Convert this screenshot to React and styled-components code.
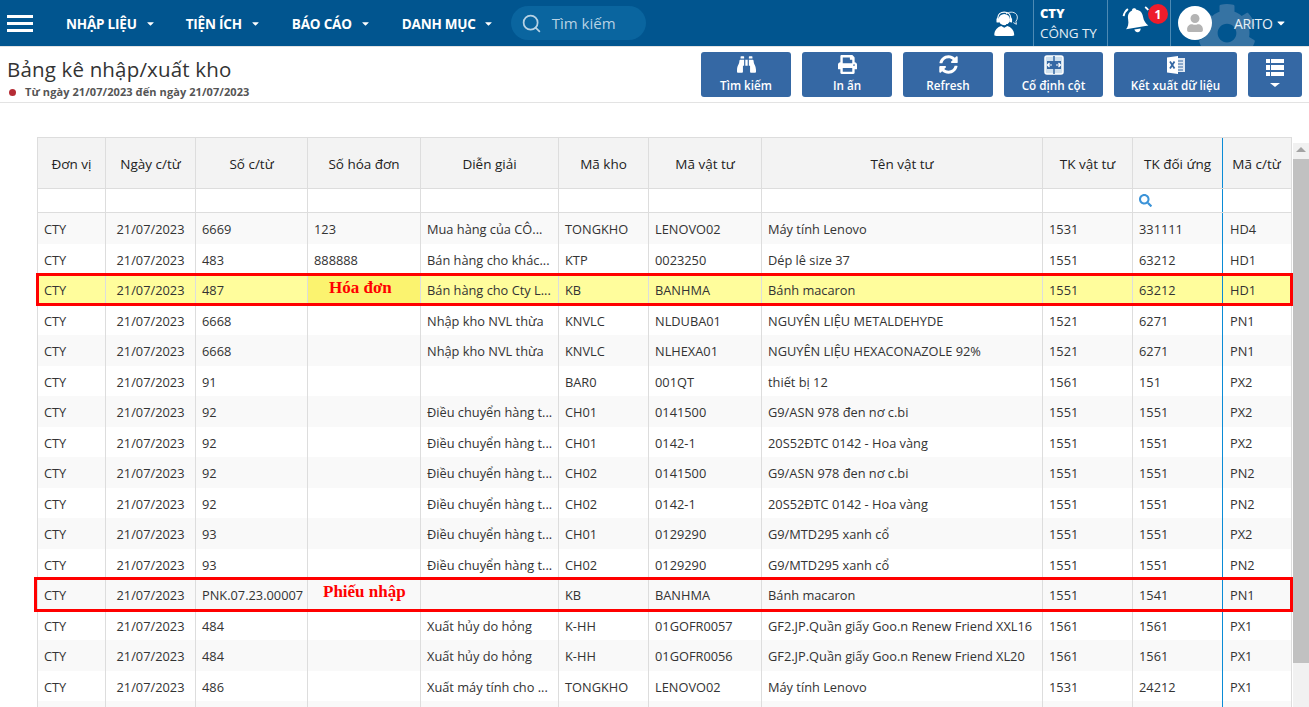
import React from "react";
import styled, { createGlobalStyle } from "styled-components";
import { FaBinoculars, FaPrint, FaSyncAlt, FaCog, FaUser, FaCaretDown, FaSearch } from "react-icons/fa";
import { FiSearch } from "react-icons/fi";

const columns = "68px 90px 112px 113px 138px 90px 113px 281px 90px 90px 68px";

const headers = ["Đơn vị", "Ngày c/từ", "Số c/từ", "Số hóa đơn", "Diễn giải", "Mã kho", "Mã vật tư", "Tên vật tư", "TK vật tư", "TK đối ứng", "Mã c/từ"];

const rows = [
  ["6669", "123", "Mua hàng của CÔ...", "TONGKHO", "LENOVO02", "Máy tính Lenovo", "1531", "331111", "HD4"],
  ["483", "888888", "Bán hàng cho khác...", "KTP", "0023250", "Dép lê size 37", "1551", "63212", "HD1"],
  ["487", "", "Bán hàng cho Cty L...", "KB", "BANHMA", "Bánh macaron", "1551", "63212", "HD1"],
  ["6668", "", "Nhập kho NVL thừa", "KNVLC", "NLDUBA01", "NGUYÊN LIỆU METALDEHYDE", "1521", "6271", "PN1"],
  ["6668", "", "Nhập kho NVL thừa", "KNVLC", "NLHEXA01", "NGUYÊN LIỆU HEXACONAZOLE 92%", "1521", "6271", "PN1"],
  ["91", "", "", "BAR0", "001QT", "thiết bị 12", "1561", "151", "PX2"],
  ["92", "", "Điều chuyển hàng t...", "CH01", "0141500", "G9/ASN 978 đen nơ c.bi", "1551", "1551", "PX2"],
  ["92", "", "Điều chuyển hàng t...", "CH01", "0142-1", "20S52ĐTC 0142 - Hoa vàng", "1551", "1551", "PX2"],
  ["92", "", "Điều chuyển hàng t...", "CH02", "0141500", "G9/ASN 978 đen nơ c.bi", "1551", "1551", "PN2"],
  ["92", "", "Điều chuyển hàng t...", "CH02", "0142-1", "20S52ĐTC 0142 - Hoa vàng", "1551", "1551", "PN2"],
  ["93", "", "Điều chuyển hàng t...", "CH01", "0129290", "G9/MTD295 xanh cổ", "1551", "1551", "PX2"],
  ["93", "", "Điều chuyển hàng t...", "CH02", "0129290", "G9/MTD295 xanh cổ", "1551", "1551", "PN2"],
  ["PNK.07.23.00007", "", "", "KB", "BANHMA", "Bánh macaron", "1551", "1541", "PN1"],
  ["484", "", "Xuất hủy do hỏng", "K-HH", "01GOFR0057", "GF2.JP.Quần giấy Goo.n Renew Friend XXL16", "1561", "1561", "PX1"],
  ["484", "", "Xuất hủy do hỏng", "K-HH", "01GOFR0056", "GF2.JP.Quần giấy Goo.n Renew Friend XL20", "1561", "1561", "PX1"],
  ["486", "", "Xuất máy tính cho ...", "TONGKHO", "LENOVO02", "Máy tính Lenovo", "1531", "24212", "PX1"],
];

const GlobalStyle = createGlobalStyle`
  html, body {
    margin: 0;
    padding: 0;
    background: #fff;
    font-family: "Open Sans", "Noto Sans", sans-serif;
    overflow: hidden;
  }
`;

const Page = styled.div`
  width: 1309px;
  height: 707px;
  display: flex;
  flex-direction: column;
  overflow: hidden;
  position: relative;
`;

const Topbar = styled.header`
  height: 46px;
  flex: none;
  background: #01558f;
  display: flex;
  align-items: center;
  color: #fff;
  position: relative;
  overflow: hidden;
`;

const Burger = styled.div`
  width: 26px;
  margin: 0 33px 0 7px;
  display: flex;
  flex-direction: column;
  gap: 4px;
  span {
    display: block;
    height: 3px;
    background: #fff;
  }
`;

const NavItem = styled.div`
  display: flex;
  align-items: center;
  padding-top: 1px;
  font-size: 13.5px;
  font-weight: 700;
  letter-spacing: -0.2px;
  white-space: nowrap;
  margin-left: ${(p) => p.$gap}px;
  svg {
    margin-left: ${(p) => p.$caret}px;
    font-size: 11px;
  }
`;

const SearchPill = styled.div`
  width: 135px;
  height: 34px;
  margin-left: 17px;
  border-radius: 17px;
  background: #0a659f;
  display: flex;
  align-items: center;
  padding-left: 10px;
  box-sizing: border-box;
  color: #b7d2e4;
  font-size: 15px;
  svg {
    font-size: 21px;
    margin-right: 10px;
  }
`;

const TopRight = styled.div`
  margin-left: auto;
  display: flex;
  align-items: stretch;
  height: 46px;
  position: relative;
`;

const Support = styled.div`
  width: 62px;
  display: flex;
  align-items: center;
  padding-left: 21px;
  box-sizing: border-box;
`;

const Company = styled.div`
  width: 74px;
  border-left: 1px solid #4d8ab4;
  padding-left: 6px;
  box-sizing: border-box;
  display: flex;
  flex-direction: column;
  justify-content: center;
  line-height: 20px;
  font-size: 13.5px;
  letter-spacing: -0.1px;
  white-space: nowrap;
  color: #e4eef5;
  strong {
    font-size: 13px;
    font-weight: 800;
    color: #fff;
  }
`;

const Notify = styled.div`
  width: 64px;
  border-left: 1px solid #4d8ab4;
  border-right: 1px solid #4d8ab4;
  box-sizing: border-box;
  position: relative;
`;

const BellWrap = styled.div`
  position: absolute;
  left: 14px;
  top: 4px;
`;

const Badge = styled.span`
  position: absolute;
  left: 40px;
  top: 4px;
  width: 20px;
  height: 20px;
  border-radius: 50%;
  background: #ee1c2b;
  color: #fff;
  font-size: 12px;
  font-weight: 700;
  display: flex;
  align-items: center;
  justify-content: center;
`;

const UserBox = styled.div`
  width: 138px;
  display: flex;
  align-items: center;
  padding-left: 7px;
  box-sizing: border-box;
  font-size: 14px;
  letter-spacing: -0.3px;
  color: #e8f0f6;
  position: relative;
  svg.caret {
    margin-left: 2px;
    font-size: 12px;
    color: #fff;
    position: relative;
  }
`;

const Avatar = styled.div`
  width: 34px;
  height: 34px;
  border-radius: 50%;
  background: #fff;
  color: #b4b4b4;
  display: flex;
  align-items: center;
  justify-content: center;
  font-size: 18px;
  margin-right: 22px;
  flex: none;
  position: relative;
`;

const GearMark = styled(FaCog)`
  position: absolute;
  left: 26px;
  top: 3px;
  font-size: 60px;
  color: #3673a3;
`;

const UserName = styled.span`
  position: relative;
`;

const SubHeader = styled.div`
  height: 55px;
  flex: none;
  border-top: 1px solid #e3e3e3;
  border-bottom: 1px solid #e3e3e3;
  display: flex;
  justify-content: space-between;
  align-items: flex-start;
`;

const TitleBlock = styled.div`
  padding: 9px 0 0 7px;
`;

const Title = styled.h1`
  margin: 0;
  font-size: 20.5px;
  font-weight: 400;
  line-height: 27px;
  color: #333;
  letter-spacing: 0.17px;
`;

const DateLine = styled.div`
  display: flex;
  align-items: center;
  margin-top: 1px;
  font-size: 11px;
  font-weight: 700;
  letter-spacing: 0.08px;
  color: #555;
  line-height: 16px;
  &::before {
    content: "";
    width: 7px;
    height: 7px;
    border-radius: 50%;
    background: #b52c35;
    margin: 0 9px 0 2px;
  }
`;

const Toolbar = styled.div`
  display: flex;
  gap: 11px;
  padding: 5px 7px 0 0;
`;

const ToolButton = styled.button`
  width: ${(p) => p.$w}px;
  height: 45px;
  padding: 0;
  border: 0;
  border-radius: 3px;
  background: #3568a4;
  color: #fff;
  font-family: inherit;
  font-size: 11.7px;
  font-weight: 600;
  display: flex;
  flex-direction: column;
  align-items: center;
  justify-content: flex-start;
  span {
    margin-top: 1px;
    line-height: 15px;
  }
`;

const IconSlot = styled.div`
  height: ${(p) => p.$h || 25}px;
  display: flex;
  align-items: center;
  justify-content: center;
  font-size: 19px;
`;

const Content = styled.div`
  margin-top: 34px;
  flex: 1;
  display: flex;
  min-height: 0;
  padding-left: 37px;
  position: relative;
`;

const Grid = styled.div`
  width: 1254px;
  flex: none;
  border-top: 1px solid #ddd;
  border-right: 1px solid #ddd;
  overflow: hidden;
`;

const Row = styled.div`
  display: grid;
  grid-template-columns: ${columns};
  box-sizing: border-box;
  height: ${(p) => p.$h}px;
  background: ${(p) => p.$bg || "#fff"};
  font-size: 12.8px;
  color: #333;
`;

const HeadRow = styled(Row)`
  border-bottom: 1px solid #ddd;
  color: #222;
  font-size: 13.5px;
  font-weight: 500;
`;

const FilterRow = styled(Row)`
  border-bottom: 1px solid #ddd;
`;

const Cell = styled.div`
  border-left: 1px solid ${(p) => (p.$pinned ? "#0a8bd6" : "#ddd")};
  padding-top: ${(p) => p.$top || 0}px;
  padding-left: ${(p) => (p.$center ? 0 : p.$pinned ? 7 : 6)}px;
  display: flex;
  align-items: center;
  justify-content: ${(p) => (p.$center ? "center" : "flex-start")};
  white-space: nowrap;
  overflow: hidden;
  background: ${(p) => (p.$marked ? "#fbf36f" : "transparent")};
  svg {
    color: #3b93d8;
    font-size: 13px;
  }
`;

const Track = styled.div`
  width: 17px;
  margin: 6px 0 0 1px;
  background: #f1f1f1;
  display: flex;
  flex-direction: column;
  align-items: center;
  &::before {
    content: "";
    margin-top: 4px;
    border-left: 5px solid transparent;
    border-right: 5px solid transparent;
    border-bottom: 5px solid #a3a3a3;
  }
`;

const Thumb = styled.div`
  width: 100%;
  height: 504px;
  margin-top: 7px;
  background: #c1c1c1;
`;

const RedBox = styled.div`
  position: absolute;
  left: ${(p) => p.$left}px;
  top: ${(p) => p.$top}px;
  width: ${(p) => p.$width}px;
  height: ${(p) => p.$height}px;
  box-sizing: border-box;
  border: 3px solid #f00;
  pointer-events: none;
`;

const RedLabel = styled.span`
  position: absolute;
  left: ${(p) => p.$left}px;
  top: 2px;
  line-height: 20px;
  font-family: "Liberation Serif", serif;
  font-size: 17px;
  font-weight: 700;
  color: #f00;
  white-space: nowrap;
`;

const HeadsetIcon = () => (
  <svg width="28" height="26" viewBox="0 0 30 30" fill="none">
    <path d="M15 4.500c3-2.500 9-3 12 .5 1.800 2.500 1.200 6-.5 8l.5 3.500-3.500-2" stroke="#fff" strokeWidth="1" />
    <circle cx="13" cy="11" r="6.500" fill="#fff" />
    <path d="M5.500 12V9.500C5.500 5 9 2.500 13 2.500S20.500 5 20.500 9.500V12" stroke="#fff" strokeWidth="1.600" />
    <rect x="4" y="9.500" width="3" height="5" rx="1" fill="#fff" />
    <rect x="19" y="9.500" width="3" height="5" rx="1" fill="#fff" />
    <path d="M20 14c-.5 2-2.500 3-5 3" stroke="#01558f" strokeWidth="1.200" />
    <path d="M1.500 29c0-6 4-9.500 8-10.500l3.500 2 3.500-2c4 1 8 4.500 8 10.500 0 1-11 1.500-11.500 1.500S1.500 30 1.500 29z" fill="#fff" />
  </svg>
);

const RingingBell = () => (
  <svg width="28" height="33" viewBox="0 0 26 30" fill="none">
    <g transform="rotate(-10 13 15)">
      <path d="M13 3.500c-1.200 0-2 .8-2 1.800C7.500 6.200 6 9 6 12.500c0 4.500-1.500 7-3.500 9h21c-2-2-3.500-4.500-3.500-9 0-3.500-1.500-6.300-5-7.200 0-1-.8-1.800-2-1.800z" fill="#fff" />
      <path d="M10 23c.3 1.800 1.500 3 3 3s2.700-1.200 3-3z" fill="#fff" />
    </g>
    <path d="M1.500 11C2 8 3.200 6 5.500 4.300M21.500 2.500c1.200.8 2 1.600 2.800 2.800" stroke="#fff" strokeWidth="1.800" />
  </svg>
);

const FreezeIcon = () => (
  <svg width="22" height="22" viewBox="0 0 22 22" fill="none">
    <rect x="2" y="2" width="18" height="18" rx="2" fill="#cfe0ee" stroke="#fff" strokeWidth="1.500" />
    <rect x="4" y="7" width="14" height="8" fill="#3568a4" />
    <path d="M11 2v18" stroke="#3568a4" strokeWidth="1.500" />
    <path d="M9 11H4.500m2-2l-2 2 2 2M13 11h4.500m-2-2l2 2-2 2" stroke="#fff" strokeWidth="1.200" />
  </svg>
);

const ExcelIcon = () => (
  <svg width="20" height="20" viewBox="0 0 20 20">
    <path d="M9 3h10v14H9z" fill="#dfe8f2" />
    <path d="M12 6h5M12 9h5M12 12h5M12 15h5" stroke="#3568a4" strokeWidth="1" />
    <path d="M1 2.500L12 1v18L1 17.500z" fill="#fff" />
    <path d="M4 6.500l4.500 7M8.500 6.500l-4.500 7" stroke="#3568a4" strokeWidth="1.800" />
  </svg>
);

const ListIcon = () => (
  <svg width="20" height="34" viewBox="0 0 20 34" fill="#fff">
    <path d="M1 1h4v4H1zM6 1h13v4H6zM1 7h4v5H1zM6 7h13v5H6zM1 14h4v4H1zM6 14h13v4H6z" />
    <path d="M5 25h10l-5 4z" />
  </svg>
);

const App = () => {
  return (
    <Page>
      <GlobalStyle />
      <Topbar>
        <Burger>
          <span />
          <span />
          <span />
        </Burger>
        <NavItem $gap={0} $caret={8}>NHẬP LIỆU <FaCaretDown /></NavItem>
        <NavItem $gap={30} $caret={8}>TIỆN ÍCH <FaCaretDown /></NavItem>
        <NavItem $gap={31} $caret={8}>BÁO CÁO <FaCaretDown /></NavItem>
        <NavItem $gap={31} $caret={7}>DANH MỤC <FaCaretDown /></NavItem>
        <SearchPill>
          <FiSearch />
          Tìm kiếm
        </SearchPill>
        <TopRight>
          <Support>
            <HeadsetIcon />
          </Support>
          <Company>
            <strong>CTY</strong>
            CÔNG TY
          </Company>
          <Notify>
            <BellWrap>
              <RingingBell />
            </BellWrap>
            <Badge>1</Badge>
          </Notify>
          <UserBox>
            <GearMark />
            <Avatar>
              <FaUser />
            </Avatar>
            <UserName>ARITO</UserName>
            <FaCaretDown className="caret" />
          </UserBox>
        </TopRight>
      </Topbar>

      <SubHeader>
        <TitleBlock>
          <Title>Bảng kê nhập/xuất kho</Title>
          <DateLine>Từ ngày 21/07/2023 đến ngày 21/07/2023</DateLine>
        </TitleBlock>
        <Toolbar>
          <ToolButton $w={90}>
            <IconSlot><FaBinoculars /></IconSlot>
            <span>Tìm kiếm</span>
          </ToolButton>
          <ToolButton $w={90}>
            <IconSlot><FaPrint /></IconSlot>
            <span>In ấn</span>
          </ToolButton>
          <ToolButton $w={90}>
            <IconSlot><FaSyncAlt /></IconSlot>
            <span>Refresh</span>
          </ToolButton>
          <ToolButton $w={99}>
            <IconSlot><FreezeIcon /></IconSlot>
            <span>Cố định cột</span>
          </ToolButton>
          <ToolButton $w={123}>
            <IconSlot><ExcelIcon /></IconSlot>
            <span>Kết xuất dữ liệu</span>
          </ToolButton>
          <ToolButton $w={54}>
            <IconSlot $h={45}><ListIcon /></IconSlot>
          </ToolButton>
        </Toolbar>
      </SubHeader>

      <Content>
        <Grid>
          <HeadRow $h={51} $bg="#f3f3f3">
            {headers.map((h, i) => (
              <Cell key={h} $center $top={2} $pinned={i === 10}>{h}</Cell>
            ))}
          </HeadRow>
          <FilterRow $h={24}>
            {headers.map((h, i) => (
              <Cell key={h} $pinned={i === 10}>{i === 9 && <FaSearch />}</Cell>
            ))}
          </FilterRow>
          {rows.map((r, i) => (
            <Row key={i} $h={30.53} $bg={i === 2 ? "#fffd9c" : i % 2 === 0 ? "#f9f9f9" : "#fff"}>
              <Cell $top={1.5}>CTY</Cell>
              <Cell $top={1.5} $center>21/07/2023</Cell>
              {r.map((v, j) => (
                <Cell key={j} $top={1.5} $pinned={j === 8} $marked={i === 2 && j === 1}>{v}</Cell>
              ))}
            </Row>
          ))}
          <Row $h={30.53} $bg="#f9f9f9">
            {headers.map((h, i) => (
              <Cell key={h} $pinned={i === 10} />
            ))}
          </Row>
        </Grid>
        <Track>
          <Thumb />
        </Track>
        <RedBox $left={36} $top={136} $width={1257} $height={33}>
          <RedLabel $left={290}>Hóa đơn</RedLabel>
        </RedBox>
        <RedBox $left={34} $top={440} $width={1259} $height={35}>
          <RedLabel $left={286}>Phiếu nhập</RedLabel>
        </RedBox>
      </Content>
    </Page>
  );
};

export default App;
